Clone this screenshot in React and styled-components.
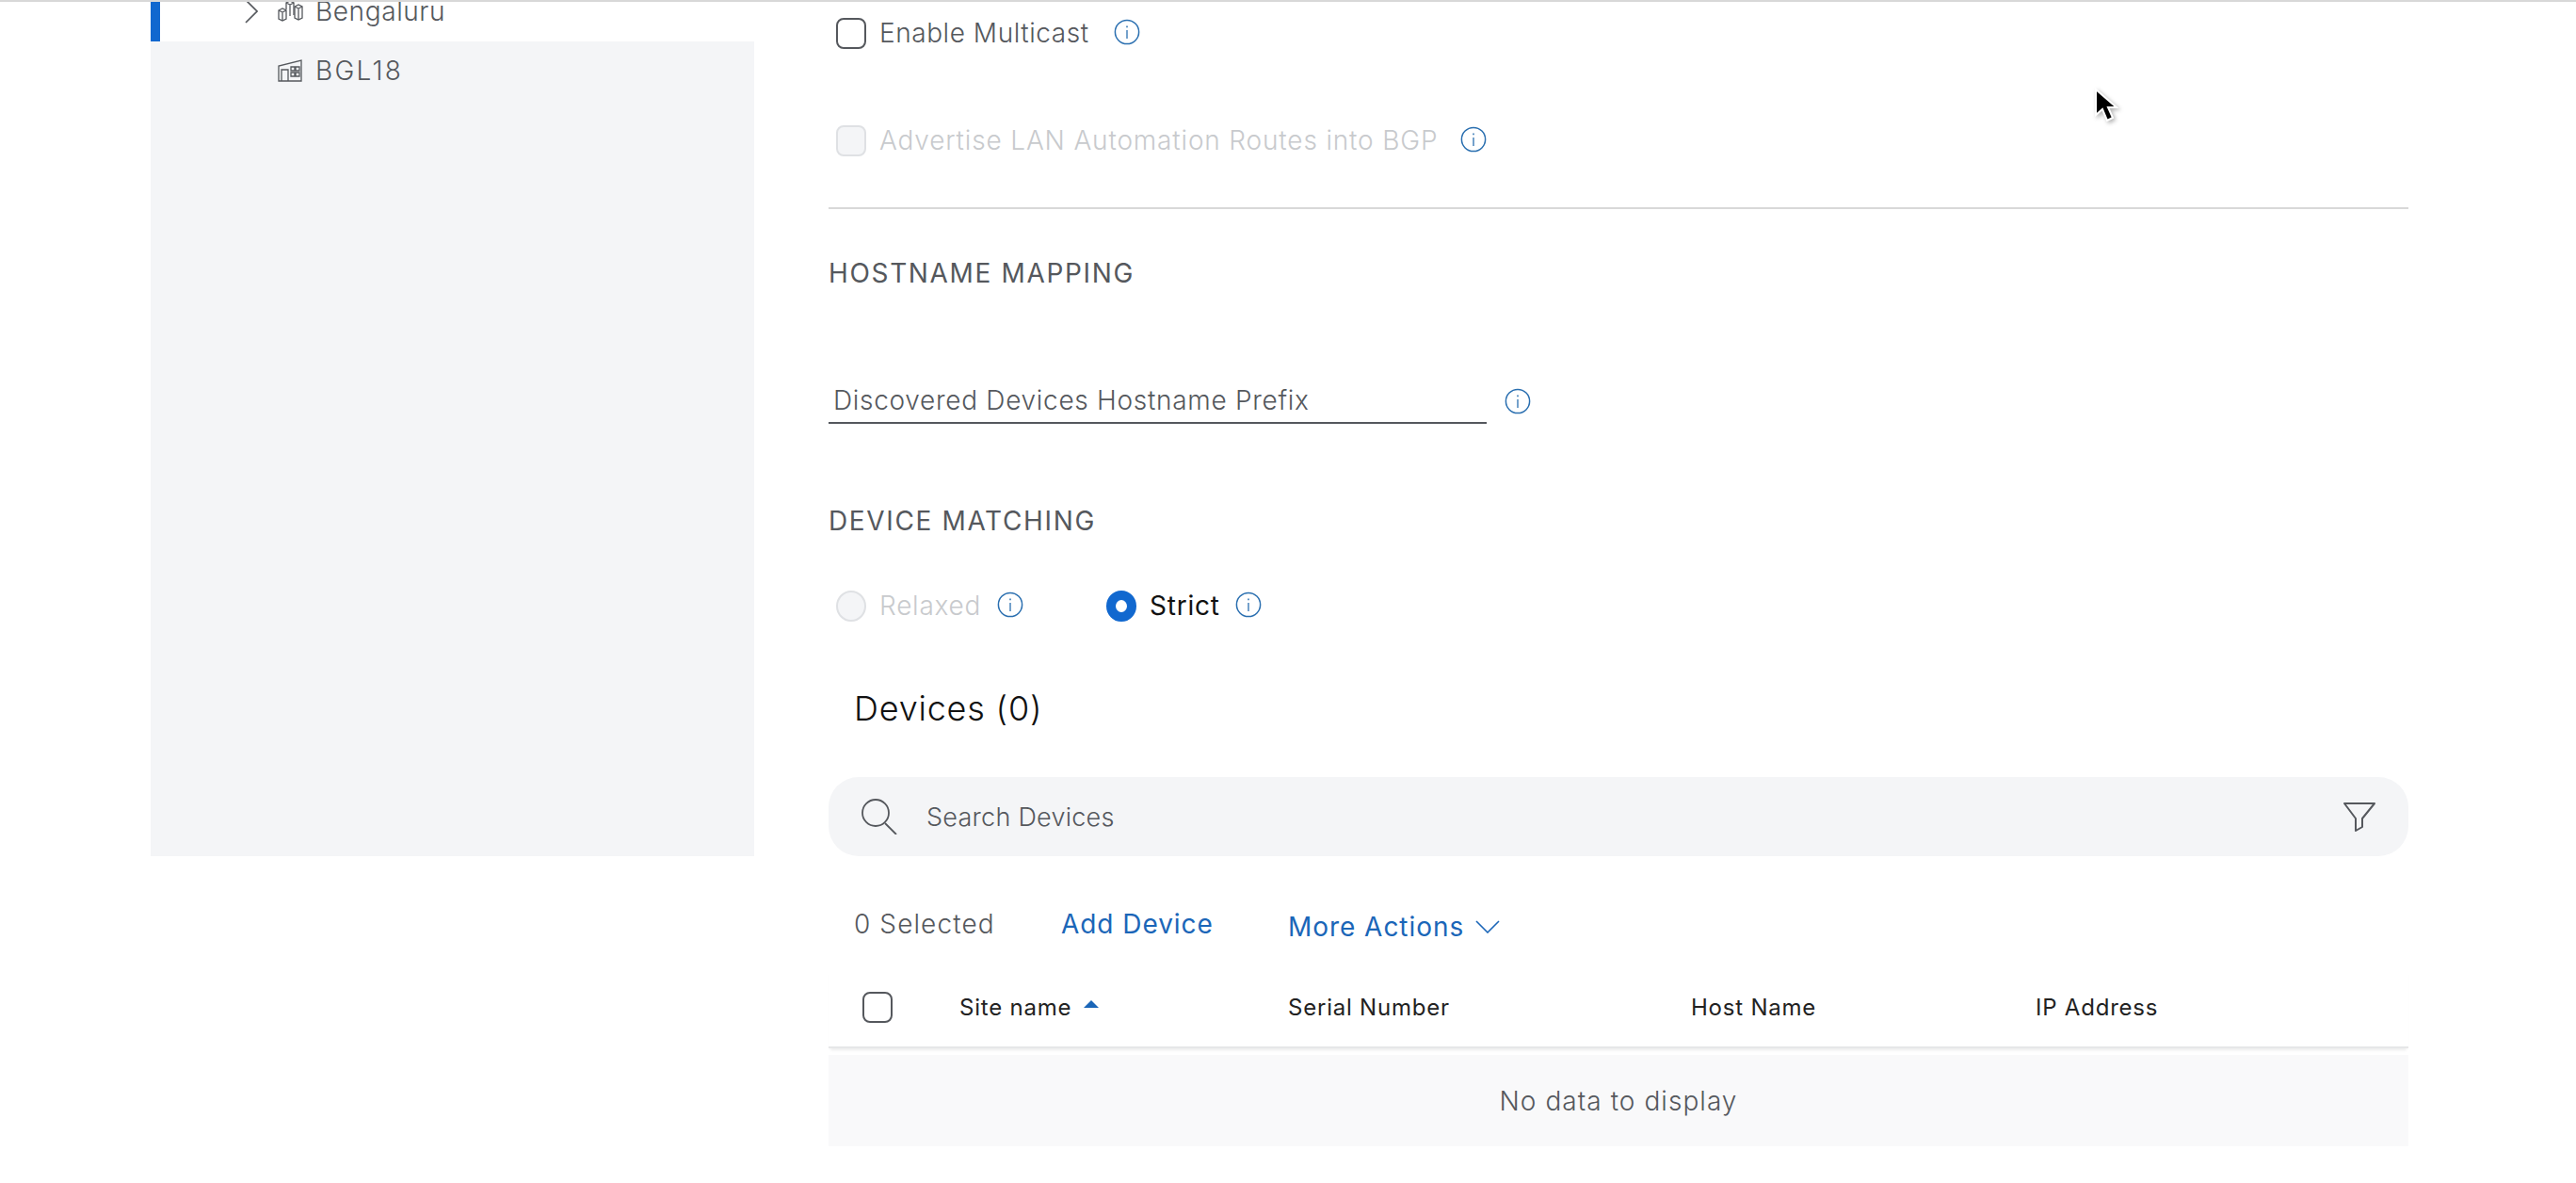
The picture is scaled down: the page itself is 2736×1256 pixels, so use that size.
import React from "react";
import styled, { createGlobalStyle } from "styled-components";

const GlobalStyle = createGlobalStyle`
  html, body {
    margin: 0;
    padding: 0;
    background: #fff;
    font-family: Inter, "Liberation Sans", sans-serif;
    font-weight: 300;
    color: #55585d;
  }
`;

const Page = styled.div`
  position: relative;
  display: flex;
  width: 2736px;
  height: 1256px;
  overflow: hidden;
  border-top: 2px solid #d8d8d8;
  padding-left: 160px;
  box-sizing: border-box;
`;

const Sidebar = styled.aside`
  width: 641px;
  height: 909px;
  margin-top: -2px;
  background: #f4f5f7;
  flex-shrink: 0;
`;

const TreeRow = styled.div`
  display: flex;
  align-items: center;
  height: ${(p) => p.$height}px;
  padding-bottom: ${(p) => p.$bottom || 0}px;
  box-sizing: border-box;
  background: ${(p) => (p.$active ? "#fff" : "transparent")};
  border-left: 10px solid ${(p) => (p.$active ? "#1168cf" : "transparent")};
`;

const Twist = styled.span`
  display: flex;
  width: 35px;
  margin-left: 90px;
`;

const TreeIcon = styled.span`
  display: flex;
  width: 28px;
  margin-right: ${(p) => p.$gap}px;
  margin-left: ${(p) => p.$indent || 0}px;
`;

const TreeLabel = styled.span`
  font-size: 28px;
  line-height: 24px;
  letter-spacing: ${(p) => p.$track}px;
`;

const Main = styled.main`
  width: 1678px;
  margin-left: 79px;
  flex-shrink: 0;
`;

const OptionRow = styled.div`
  display: flex;
  align-items: center;
  height: 66px;
  margin-top: ${(p) => p.$top || 0}px;
  padding-left: 8px;
`;

const Box = styled.span`
  display: block;
  width: 32px;
  height: 33px;
  box-sizing: border-box;
  flex-shrink: 0;
  border-radius: 8px;
  border: 2px solid ${(p) => (p.$off ? "#dfe1e4" : "#55585d")};
  background: ${(p) => (p.$off ? "#f4f5f7" : "#fff")};
`;

const OptionLabel = styled.span`
  margin-left: 14px;
  font-size: 28px;
  letter-spacing: ${(p) => p.$track || 0.75}px;
  color: ${(p) => (p.$off ? "#c8cacd" : p.$strong ? "#111" : "#55585d")};
  font-weight: ${(p) => (p.$strong ? 400 : 300)};
`;

const Info = styled.svg`
  width: 28px;
  height: 28px;
  flex-shrink: 0;
  margin-left: ${(p) => p.$left}px;
  margin-top: ${(p) => p.$up || 0}px;
`;

const InfoIcon = ({ left, up }) => (
  <Info $left={left} $up={up} viewBox="0 0 28 28" fill="none" stroke="#2a6fb0">
    <circle cx="14" cy="14" r="12.6" strokeWidth="1.5" />
    <line x1="14" y1="12" x2="14" y2="21" strokeWidth="1.3" />
    <line x1="14" y1="7.5" x2="14" y2="9.2" strokeWidth="1.5" />
  </Info>
);

const Divider = styled.hr`
  margin: 38px 0 0;
  border: 0;
  height: 2px;
  background: #d8d8d8;
`;

const SectionTitle = styled.h3`
  margin: ${(p) => p.$top}px 0 0;
  font-size: 28px;
  line-height: 34px;
  font-weight: 400;
  letter-spacing: 1.65px;
  color: #55585d;
  text-transform: uppercase;
`;

const FieldRow = styled.div`
  display: flex;
  align-items: center;
  margin-top: 95px;
`;

const Field = styled.div`
  width: 699px;
  height: 48px;
  box-sizing: border-box;
  padding-left: 5px;
  border-bottom: 2px solid #55585d;
  font-size: 28px;
  line-height: 46px;
  letter-spacing: 0.7px;
`;

const RadioRow = styled.div`
  display: flex;
  align-items: center;
  height: 40px;
  margin-top: 53px;
`;

const Radio = styled.span`
  display: block;
  width: 32px;
  height: 33px;
  box-sizing: border-box;
  flex-shrink: 0;
  border-radius: 50%;
  margin-left: ${(p) => p.$left}px;
  background: ${(p) => (p.$off ? "#f4f5f7" : "#fff")};
  border: ${(p) => (p.$off ? "2px solid #dfe1e4" : "10px solid #1168cf")};
`;

const DevicesTitle = styled.h2`
  margin: 67px 0 0 27px;
  font-size: 36px;
  line-height: 44px;
  font-weight: 300;
  letter-spacing: 0.8px;
  color: #111;
`;

const SearchBar = styled.div`
  display: flex;
  align-items: center;
  height: 84px;
  margin-top: 51px;
  padding: 0 35px 0 34px;
  border-radius: 32px;
  background: #f4f5f7;
`;

const SearchText = styled.span`
  flex: 1;
  margin-left: 30px;
  font-size: 27px;
  letter-spacing: 0.25px;
`;

const Toolbar = styled.div`
  display: flex;
  align-items: center;
  height: 40px;
  margin-top: 52px;
  padding-left: 27px;
`;

const Selected = styled.span`
  font-size: 28px;
  letter-spacing: 1.1px;
  width: 220px;
`;

const ActionLink = styled.a`
  display: flex;
  align-items: center;
  font-size: 28px;
  font-weight: 400;
  letter-spacing: 0.95px;
  color: #1b66b8;
  width: ${(p) => p.$width || "auto"};
  margin-top: ${(p) => p.$drop || 0}px;
`;

const MoreChevron = styled.svg`
  width: 26px;
  height: 14px;
  margin-left: 12px;
`;

const HeadRow = styled.div`
  display: grid;
  grid-template-columns: 139px 349px 428px 366px 1fr;
  align-items: center;
  height: 84px;
  margin-top: 26px;
  box-shadow: 0 4px 3px -2px rgba(0, 0, 0, 0.08);
  border-bottom: 2px solid #e6e7e8;
`;

const HeadCheck = styled.span`
  padding-left: 36px;
`;

const HeadCell = styled.span`
  display: flex;
  align-items: center;
  font-size: 24px;
  font-weight: 400;
  letter-spacing: 0.78px;
  color: #222;
`;

const SortArrow = styled.span`
  width: 0;
  height: 0;
  margin: -6px 0 0 13px;
  border-left: 8px solid transparent;
  border-right: 8px solid transparent;
  border-bottom: 8px solid #1b66b8;
`;

const EmptyRow = styled.div`
  display: flex;
  align-items: center;
  justify-content: center;
  height: 97px;
  margin-top: 7px;
  background: #f9f9fa;
  font-size: 28px;
  letter-spacing: 1.05px;
`;

const Cursor = styled.svg`
  position: absolute;
  left: 2220px;
  top: 85px;
  width: 30px;
  height: 46px;
  filter: drop-shadow(2px 2px 2px rgba(0, 0, 0, 0.3));
`;

const Stroke = { fill: "none", stroke: "#55585d", strokeWidth: 1.5 };

export default function App() {
  return (
    <>
      <GlobalStyle />
      <Page>
        <Sidebar>
          <TreeRow $active $height={44} $bottom={20}>
            <Twist>
              <svg width="14" height="26" viewBox="0 0 14 26" {...Stroke} strokeWidth="1.7">
                <path d="M1 1l12 12L1 25" />
              </svg>
            </Twist>
            <TreeIcon $gap={12}>
              {/* city block */}
              <svg width="28" height="22" viewBox="0 0 28 22" {...Stroke} strokeWidth="1.3">
                <path d="M1 10l4-2 4 2v9l-4 2-4-2zM1 10l4 2 4-2M5 12v9" />
                <path d="M9 9V2l4-2 4 2v13M9 2l4 2 4-2M13 4v12" />
                <path d="M18 6l4-2 4 2v12l-4 2-4-2zM18 6l4 2 4-2M22 8v12" />
              </svg>
            </TreeIcon>
            <TreeLabel $track={0.6}>Bengaluru</TreeLabel>
          </TreeRow>
          <TreeRow $height={62}>
            <TreeIcon $indent={125} $gap={12}>
              {/* floor building */}
              <svg width="26" height="24" viewBox="0 0 26 24" {...Stroke} strokeWidth="1.3">
                <path d="M1 23V7l24-6v22zM1 23h24" />
                <path d="M4 23V11h7v12" />
                <path d="M14 8h4v4h-4zM19 8h4v4h-4zM14 14h4v4h-4zM19 14h4v4h-4z" />
              </svg>
            </TreeIcon>
            <TreeLabel $track={2.3}>BGL18</TreeLabel>
          </TreeRow>
        </Sidebar>
        <Main>
          <OptionRow>
            <Box />
            <OptionLabel $track={0.55}>Enable Multicast</OptionLabel>
            <InfoIcon left={26} up={-2} />
          </OptionRow>
          <OptionRow $top={48}>
            <Box $off />
            <OptionLabel $off $track={0.84}>Advertise LAN Automation Routes into BGP</OptionLabel>
            <InfoIcon left={24} up={-2} />
          </OptionRow>
          <Divider />
          <SectionTitle $top={51}>Hostname Mapping</SectionTitle>
          <FieldRow>
            <Field>Discovered Devices Hostname Prefix</Field>
            <InfoIcon left={19} />
          </FieldRow>
          <SectionTitle $top={86}>Device Matching</SectionTitle>
          <RadioRow>
            <Radio $off $left={8} />
            <OptionLabel $off>Relaxed</OptionLabel>
            <InfoIcon left={17} up={-3} />
            <Radio $left={88} />
            <OptionLabel $strong>Strict</OptionLabel>
            <InfoIcon left={16} up={-3} />
          </RadioRow>
          <DevicesTitle>Devices (0)</DevicesTitle>
          <SearchBar>
            <svg width="40" height="38" viewBox="0 0 40 38" {...Stroke} strokeWidth="1.8">
              <circle cx="16" cy="15" r="14" />
              <path d="M26 26l12 12" />
            </svg>
            <SearchText>Search Devices</SearchText>
            <svg width="34" height="32" viewBox="0 0 34 32" {...Stroke} strokeWidth="2">
              <path d="M1 2h32L20 18v9l-7 4V18z" strokeLinejoin="round" />
            </svg>
          </SearchBar>
          <Toolbar>
            <Selected>0 Selected</Selected>
            <ActionLink $width="241px">Add Device</ActionLink>
            <ActionLink $drop={5}>
              More Actions
              <MoreChevron viewBox="0 0 26 14" fill="none" stroke="#1b66b8" strokeWidth="1.6">
                <path d="M1 1l12 12L25 1" />
              </MoreChevron>
            </ActionLink>
          </Toolbar>
          <HeadRow>
            <HeadCheck>
              <Box />
            </HeadCheck>
            <HeadCell>
              Site name
              <SortArrow />
            </HeadCell>
            <HeadCell>Serial Number</HeadCell>
            <HeadCell>Host Name</HeadCell>
            <HeadCell>IP Address</HeadCell>
          </HeadRow>
          <EmptyRow>No data to display</EmptyRow>
        </Main>
        <Cursor viewBox="0 0 30 46">
          <path d="M6 8v27l7-6 5 12 6-3-5-11h9z" fill="#000" stroke="#fff" strokeWidth="2" />
        </Cursor>
      </Page>
    </>
  );
}
